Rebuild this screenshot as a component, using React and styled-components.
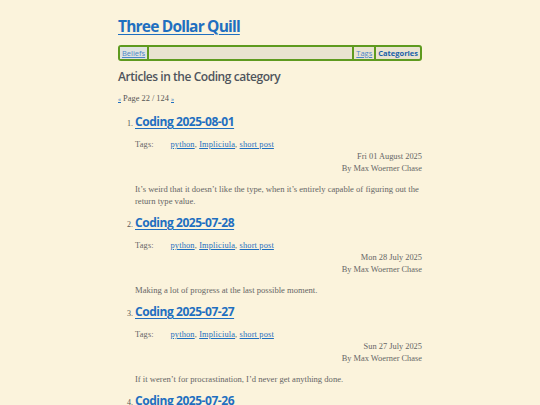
import React from "react";
import styled, { createGlobalStyle } from "styled-components";

const Global = createGlobalStyle`
  html, body { margin: 0; padding: 0; background: #fbf3dc; }
  body { font-family: "Liberation Serif", "DejaVu Serif", serif; color: #555; }
`;

const SANS = `"Open Sans", "Noto Sans", sans-serif`;
const SERIF = `"Liberation Serif", "DejaVu Serif", serif`;
const BLUE = "#1f6fc0";
const GREEN = "#5e9a1f";

const Page = styled.div`
  width: 304px;
  margin: 0 auto;
  padding-top: 16px;
`;

const SiteTitle = styled.h1`
  margin: 0;
  font-family: ${SANS};
  font-size: 15.5px;
  line-height: 20px;
  font-weight: 700;
  letter-spacing: -0.8px;
  a { color: ${BLUE}; text-decoration: underline; text-decoration-thickness: 1px; text-underline-offset: 2px; }
`;

const Nav = styled.nav`
  margin-top: 9px;
  display: flex;
  align-items: stretch;
  height: 12px;
  border: 2px solid ${GREEN};
  border-radius: 3px;
  background: #e9e3d0;
  font-family: ${SANS};
  font-size: 7.5px;
  line-height: 12px;
`;

const NavLink = styled.a`
  padding: 0 2px;
  color: ${(p) => (p.$current ? "#1a5fa8" : "#4b86c8")};
  font-weight: ${(p) => (p.$current ? 700 : 400)};
  text-decoration: ${(p) => (p.$current ? "none" : "underline")};
  background: ${(p) => (p.$hl ? "#dfe3e0" : "transparent")};
  border-left: ${(p) => (p.$sepLeft ? `2px solid ${GREEN}` : "none")};
  border-right: ${(p) => (p.$sepRight ? `2px solid ${GREEN}` : "none")};
`;

const Spacer = styled.div`
  flex: 1;
`;

const Heading = styled.h2`
  margin: 8px 0 0;
  font-family: ${SANS};
  font-size: 12px;
  line-height: 16px;
  font-weight: 600;
  color: #4f555c;
  letter-spacing: -0.45px;
`;

const Pager = styled.p`
  margin: 8px 0 0;
  font-family: ${SERIF};
  font-size: 8.4px;
  line-height: 12px;
  color: #555;
  a { color: ${BLUE}; font-size: 6px; }
`;

const List = styled.ol`
  margin: 9px 0 0;
  padding-left: 17px;
  li::marker { font-family: ${SERIF}; font-size: 8px; color: #555; }
`;

const Item = styled.li`
  margin-bottom: 8px;
`;

const ItemTitle = styled.h3`
  margin: 0;
  font-family: ${SANS};
  font-size: 12px;
  line-height: 16px;
  font-weight: 700;
  letter-spacing: -0.45px;
  a { color: ${BLUE}; text-decoration: underline; text-decoration-thickness: 1px; text-underline-offset: 1.5px; }
`;

const Tags = styled.div`
  margin-top: 9px;
  display: grid;
  grid-template-columns: 35.5px auto;
  font-size: 8.4px;
  line-height: 12px;
  color: #666;
  letter-spacing: 0.15px;
`;

const TagLink = styled.a`
  color: ${BLUE};
  text-decoration: underline;
`;

const Meta = styled.div`
  text-align: right;
  font-size: 8.4px;
  line-height: 12px;
  color: #666;
`;

const Summary = styled.p`
  margin: 8px 0 0;
  font-size: 8.6px;
  line-height: 12px;
  color: #666;
`;

const articles = [
  {
    title: "Coding 2025-08-01",
    date: "Fri 01 August 2025",
    summary:
      "It\u2019s weird that it doesn\u2019t like the type, when it\u2019s entirely capable of figuring out the return type value.",
  },
  {
    title: "Coding 2025-07-28",
    date: "Mon 28 July 2025",
    summary: "Making a lot of progress at the last possible moment.",
  },
  {
    title: "Coding 2025-07-27",
    date: "Sun 27 July 2025",
    summary: "If it weren\u2019t for procrastination, I\u2019d never get anything done.",
  },
  {
    title: "Coding 2025-07-26",
    date: "Sat 26 July 2025",
    summary: "More progress.",
  },
];

export default function App() {
  return (
    <>
      <Global />
      <Page>
        <SiteTitle>
          <a href="#">Three Dollar Quill</a>
        </SiteTitle>
        <Nav>
          <NavLink href="#" $hl $sepRight>Beliefs</NavLink>
          <Spacer />
          <NavLink href="#" $sepLeft>Tags</NavLink>
          <NavLink href="#" $sepLeft $current>Categories</NavLink>
        </Nav>
        <Heading>Articles in the Coding category</Heading>
        <Pager>
          <a href="#">«</a> Page 22 / 124 <a href="#">»</a>
        </Pager>
        <List>
          {articles.map((a) => (
            <Item key={a.title}>
              <ItemTitle>
                <a href="#">{a.title}</a>
              </ItemTitle>
              <Tags>
                <span>Tags:</span>
                <span>
                  <TagLink href="#">python</TagLink>, <TagLink href="#">Impliciula</TagLink>,{" "}
                  <TagLink href="#">short post</TagLink>
                </span>
              </Tags>
              <Meta>
                <div>{a.date}</div>
                <div>By Max Woerner Chase</div>
              </Meta>
              <Summary>{a.summary}</Summary>
            </Item>
          ))}
        </List>
      </Page>
    </>
  );
}
